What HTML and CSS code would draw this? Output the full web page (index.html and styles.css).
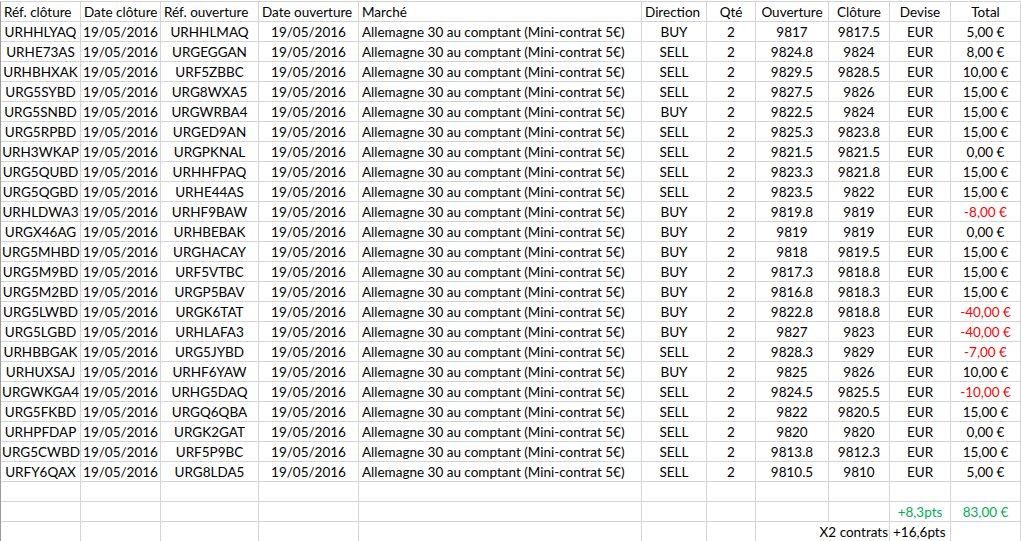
FILE: index.html
```html
<!DOCTYPE html>
<html lang="fr">
<head>
<meta charset="utf-8">
<title>Clôtures</title>
<link rel="stylesheet" href="styles.css">
</head>
<body>
<div class="sheet">
  <div class="c hl">Réf. clôture</div><div class="c hl">Date clôture</div><div class="c hl">Réf. ouverture</div><div class="c hl">Date ouverture</div><div class="c hl">Marché</div><div class="c hl">Direction</div><div class="c">Qté</div><div class="c">Ouverture</div><div class="c">Clôture</div><div class="c">Devise</div><div class="c">Total</div>

  <div class="c">URHHLYAQ</div><div class="c">19/05/2016</div><div class="c">URHHLMAQ</div><div class="c">19/05/2016</div><div class="c l">Allemagne 30 au comptant (Mini-contrat 5€)</div><div class="c">BUY</div><div class="c">2</div><div class="c">9817</div><div class="c">9817.5</div><div class="c">EUR</div><div class="c">5,00 €</div>
  <div class="c">URHE73AS</div><div class="c">19/05/2016</div><div class="c">URGEGGAN</div><div class="c">19/05/2016</div><div class="c l">Allemagne 30 au comptant (Mini-contrat 5€)</div><div class="c">SELL</div><div class="c">2</div><div class="c">9824.8</div><div class="c">9824</div><div class="c">EUR</div><div class="c">8,00 €</div>
  <div class="c">URHBHXAK</div><div class="c">19/05/2016</div><div class="c">URF5ZBBC</div><div class="c">19/05/2016</div><div class="c l">Allemagne 30 au comptant (Mini-contrat 5€)</div><div class="c">SELL</div><div class="c">2</div><div class="c">9829.5</div><div class="c">9828.5</div><div class="c">EUR</div><div class="c">10,00 €</div>
  <div class="c">URG5SYBD</div><div class="c">19/05/2016</div><div class="c">URG8WXA5</div><div class="c">19/05/2016</div><div class="c l">Allemagne 30 au comptant (Mini-contrat 5€)</div><div class="c">SELL</div><div class="c">2</div><div class="c">9827.5</div><div class="c">9826</div><div class="c">EUR</div><div class="c">15,00 €</div>
  <div class="c">URG5SNBD</div><div class="c">19/05/2016</div><div class="c">URGWRBA4</div><div class="c">19/05/2016</div><div class="c l">Allemagne 30 au comptant (Mini-contrat 5€)</div><div class="c">BUY</div><div class="c">2</div><div class="c">9822.5</div><div class="c">9824</div><div class="c">EUR</div><div class="c">15,00 €</div>
  <div class="c">URG5RPBD</div><div class="c">19/05/2016</div><div class="c">URGED9AN</div><div class="c">19/05/2016</div><div class="c l">Allemagne 30 au comptant (Mini-contrat 5€)</div><div class="c">SELL</div><div class="c">2</div><div class="c">9825.3</div><div class="c">9823.8</div><div class="c">EUR</div><div class="c">15,00 €</div>
  <div class="c">URH3WKAP</div><div class="c">19/05/2016</div><div class="c">URGPKNAL</div><div class="c">19/05/2016</div><div class="c l">Allemagne 30 au comptant (Mini-contrat 5€)</div><div class="c">SELL</div><div class="c">2</div><div class="c">9821.5</div><div class="c">9821.5</div><div class="c">EUR</div><div class="c">0,00 €</div>
  <div class="c">URG5QUBD</div><div class="c">19/05/2016</div><div class="c">URHHFPAQ</div><div class="c">19/05/2016</div><div class="c l">Allemagne 30 au comptant (Mini-contrat 5€)</div><div class="c">SELL</div><div class="c">2</div><div class="c">9823.3</div><div class="c">9821.8</div><div class="c">EUR</div><div class="c">15,00 €</div>
  <div class="c">URG5QGBD</div><div class="c">19/05/2016</div><div class="c">URHE44AS</div><div class="c">19/05/2016</div><div class="c l">Allemagne 30 au comptant (Mini-contrat 5€)</div><div class="c">SELL</div><div class="c">2</div><div class="c">9823.5</div><div class="c">9822</div><div class="c">EUR</div><div class="c">15,00 €</div>
  <div class="c">URHLDWA3</div><div class="c">19/05/2016</div><div class="c">URHF9BAW</div><div class="c">19/05/2016</div><div class="c l">Allemagne 30 au comptant (Mini-contrat 5€)</div><div class="c">BUY</div><div class="c">2</div><div class="c">9819.8</div><div class="c">9819</div><div class="c">EUR</div><div class="c neg">-8,00 €</div>
  <div class="c">URGX46AG</div><div class="c">19/05/2016</div><div class="c">URHBEBAK</div><div class="c">19/05/2016</div><div class="c l">Allemagne 30 au comptant (Mini-contrat 5€)</div><div class="c">BUY</div><div class="c">2</div><div class="c">9819</div><div class="c">9819</div><div class="c">EUR</div><div class="c">0,00 €</div>
  <div class="c">URG5MHBD</div><div class="c">19/05/2016</div><div class="c">URGHACAY</div><div class="c">19/05/2016</div><div class="c l">Allemagne 30 au comptant (Mini-contrat 5€)</div><div class="c">BUY</div><div class="c">2</div><div class="c">9818</div><div class="c">9819.5</div><div class="c">EUR</div><div class="c">15,00 €</div>
  <div class="c">URG5M9BD</div><div class="c">19/05/2016</div><div class="c">URF5VTBC</div><div class="c">19/05/2016</div><div class="c l">Allemagne 30 au comptant (Mini-contrat 5€)</div><div class="c">BUY</div><div class="c">2</div><div class="c">9817.3</div><div class="c">9818.8</div><div class="c">EUR</div><div class="c">15,00 €</div>
  <div class="c">URG5M2BD</div><div class="c">19/05/2016</div><div class="c">URGP5BAV</div><div class="c">19/05/2016</div><div class="c l">Allemagne 30 au comptant (Mini-contrat 5€)</div><div class="c">BUY</div><div class="c">2</div><div class="c">9816.8</div><div class="c">9818.3</div><div class="c">EUR</div><div class="c">15,00 €</div>
  <div class="c">URG5LWBD</div><div class="c">19/05/2016</div><div class="c">URGK6TAT</div><div class="c">19/05/2016</div><div class="c l">Allemagne 30 au comptant (Mini-contrat 5€)</div><div class="c">BUY</div><div class="c">2</div><div class="c">9822.8</div><div class="c">9818.8</div><div class="c">EUR</div><div class="c neg">-40,00 €</div>
  <div class="c">URG5LGBD</div><div class="c">19/05/2016</div><div class="c">URHLAFA3</div><div class="c">19/05/2016</div><div class="c l">Allemagne 30 au comptant (Mini-contrat 5€)</div><div class="c">BUY</div><div class="c">2</div><div class="c">9827</div><div class="c">9823</div><div class="c">EUR</div><div class="c neg">-40,00 €</div>
  <div class="c">URHBBGAK</div><div class="c">19/05/2016</div><div class="c">URG5JYBD</div><div class="c">19/05/2016</div><div class="c l">Allemagne 30 au comptant (Mini-contrat 5€)</div><div class="c">SELL</div><div class="c">2</div><div class="c">9828.3</div><div class="c">9829</div><div class="c">EUR</div><div class="c neg">-7,00 €</div>
  <div class="c">URHUXSAJ</div><div class="c">19/05/2016</div><div class="c">URHF6YAW</div><div class="c">19/05/2016</div><div class="c l">Allemagne 30 au comptant (Mini-contrat 5€)</div><div class="c">BUY</div><div class="c">2</div><div class="c">9825</div><div class="c">9826</div><div class="c">EUR</div><div class="c">10,00 €</div>
  <div class="c">URGWKGA4</div><div class="c">19/05/2016</div><div class="c">URHG5DAQ</div><div class="c">19/05/2016</div><div class="c l">Allemagne 30 au comptant (Mini-contrat 5€)</div><div class="c">SELL</div><div class="c">2</div><div class="c">9824.5</div><div class="c">9825.5</div><div class="c">EUR</div><div class="c neg">-10,00 €</div>
  <div class="c">URG5FKBD</div><div class="c">19/05/2016</div><div class="c">URGQ6QBA</div><div class="c">19/05/2016</div><div class="c l">Allemagne 30 au comptant (Mini-contrat 5€)</div><div class="c">SELL</div><div class="c">2</div><div class="c">9822</div><div class="c">9820.5</div><div class="c">EUR</div><div class="c">15,00 €</div>
  <div class="c">URHPFDAP</div><div class="c">19/05/2016</div><div class="c">URGK2GAT</div><div class="c">19/05/2016</div><div class="c l">Allemagne 30 au comptant (Mini-contrat 5€)</div><div class="c">SELL</div><div class="c">2</div><div class="c">9820</div><div class="c">9820</div><div class="c">EUR</div><div class="c">0,00 €</div>
  <div class="c">URG5CWBD</div><div class="c">19/05/2016</div><div class="c">URF5P9BC</div><div class="c">19/05/2016</div><div class="c l">Allemagne 30 au comptant (Mini-contrat 5€)</div><div class="c">SELL</div><div class="c">2</div><div class="c">9813.8</div><div class="c">9812.3</div><div class="c">EUR</div><div class="c">15,00 €</div>
  <div class="c">URFY6QAX</div><div class="c">19/05/2016</div><div class="c">URG8LDA5</div><div class="c">19/05/2016</div><div class="c l">Allemagne 30 au comptant (Mini-contrat 5€)</div><div class="c">SELL</div><div class="c">2</div><div class="c">9810.5</div><div class="c">9810</div><div class="c">EUR</div><div class="c">5,00 €</div>

  <div class="c"></div><div class="c"></div><div class="c"></div><div class="c"></div><div class="c"></div><div class="c"></div><div class="c"></div><div class="c"></div><div class="c"></div><div class="c"></div><div class="c"></div>

  <div class="c"></div><div class="c"></div><div class="c"></div><div class="c"></div><div class="c"></div><div class="c"></div><div class="c"></div><div class="c"></div><div class="c"></div><div class="c pos">+8,3pts</div><div class="c pos">83,00 €</div>

  <div class="c"></div><div class="c"></div><div class="c"></div><div class="c"></div><div class="c"></div><div class="c"></div><div class="c"></div><div class="c r span2">X2 contrats</div><div class="c l">+16,6pts</div><div class="c"></div>
</div>
</body>
</html>
```

FILE: styles.css
```css
html, body {
  margin: 0;
  padding: 0;
  background: #ffffff;
}

body {
  padding-top: 1px;
  font-family: Lato, "Open Sans", sans-serif;
  font-size: 13.5px;
  color: #000000;
}

.sheet {
  display: grid;
  grid-template-columns: 80px 80px 98px 100px 283px 65px 49px 73px 61px 61px 70px;
  grid-auto-rows: 20px;
  width: 1020px;
  border-left: 1px solid #9b9b9b;
  border-top: 1px solid #d4d4d4;
}

.c {
  box-sizing: border-box;
  border-right: 1px solid #d4d4d4;
  border-bottom: 1px solid #d4d4d4;
  height: 20px;
  line-height: 19px;
  padding: 1px 1px 0;
  text-align: center;
  white-space: nowrap;
  overflow: hidden;
}

.hl,
.l {
  text-align: left;
  padding-left: 3px;
}

.r {
  text-align: right;
  padding-right: 1px;
}

.span2 {
  grid-column: span 2;
}

.neg {
  color: #ff0000;
}

.pos {
  color: #00b050;
}
```
